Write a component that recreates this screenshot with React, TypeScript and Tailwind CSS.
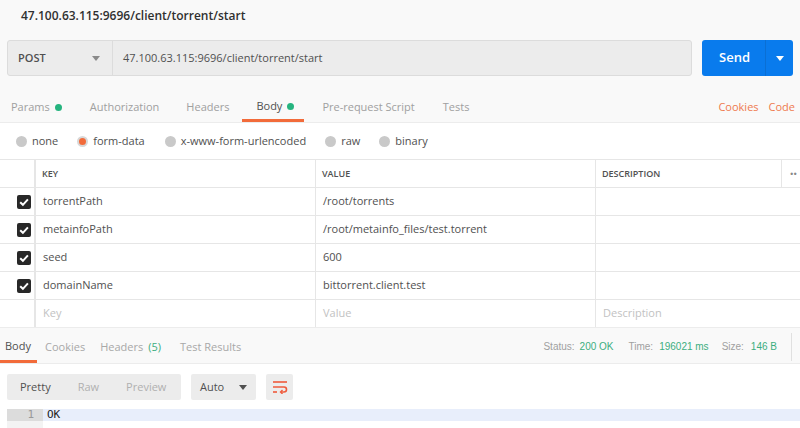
import React from "react"

const rows = [
  { key: "torrentPath", value: "/root/torrents" },
  { key: "metainfoPath", value: "/root/metainfo_files/test.torrent" },
  { key: "seed", value: "600" },
  { key: "domainName", value: "bittorrent.client.test" },
]

const Caret = ({ className }: { className: string }) => (
  <svg width="8" height="5" viewBox="0 0 8 5" className={className}>
    <path d="M0 0 L8 0 L4 5 Z" fill="currentColor" />
  </svg>
)

const Check = () => (
  <svg width="14" height="14" viewBox="0 0 14 14">
    <rect width="14" height="14" rx="2" fill="#282828" />
    <path d="M3.2 7.2 L5.9 9.8 L10.9 4.3" stroke="#fff" strokeWidth="2" fill="none" />
  </svg>
)

const Radio = ({ active }: { active?: boolean }) => (
  <span
    className={`mr-[5px] inline-block h-[11px] w-[11px] rounded-full ${
      active ? "border-2 border-[#d8d8d8] bg-[#f26b3a]" : "bg-[#c9c9c9]"
    }`}
  />
)

const WrapIcon = () => (
  <svg width="16" height="14" viewBox="0 0 16 14" className="text-[#ef5b3c]">
    <path d="M1 2 H15" stroke="currentColor" strokeWidth="1.6" />
    <path d="M1 7 H12 a2.5 2.5 0 0 1 0 5 H9" stroke="currentColor" strokeWidth="1.6" fill="none" />
    <path d="M10.5 10 L8.5 12 L10.5 14" stroke="currentColor" strokeWidth="1.4" fill="none" />
    <path d="M1 12 H5" stroke="currentColor" strokeWidth="1.6" />
  </svg>
)

export default function App() {
  return (
    <div className="h-[428px] w-[800px] overflow-hidden bg-white font-['Open_Sans',sans-serif] text-[11px] text-[#333]">
      {/* request header */}
      <div className="bg-[#f9f9f9]">
        <div className="flex h-[31px] items-center px-[21px] pt-[1px] text-[12px] font-semibold text-[#303030]">
          47.100.63.115:9696/client/torrent/start
        </div>
        <div className="flex h-[59px] pt-[9px] pr-[7px] pl-[7px]">
          <div className="flex h-[36px] flex-1 rounded-[3px] border border-[#dcdcdc] bg-[#ececec]">
            <div className="flex w-[105px] items-center justify-between border-r border-[#dcdcdc] pr-[12px] pl-[10px] font-semibold text-[#505050]">
              POST
              <Caret className="text-[#8a8a8a]" />
            </div>
            <div className="flex items-center pl-[10px] text-[#505050]">
              47.100.63.115:9696/client/torrent/start
            </div>
          </div>
          <div className="ml-[10px] flex h-[36px] w-[91px] rounded-[3px] bg-[#097bed] text-white">
            <div className="flex flex-1 items-center justify-center pl-[2px] text-[13px] font-semibold">
              Send
            </div>
            <div className="flex w-[28px] items-center justify-center border-l border-[#0a6fd4]">
              <Caret className="text-white" />
            </div>
          </div>
        </div>
        <div className="flex h-[33px] items-stretch border-b border-[#ececec] pt-[3px] text-[#a0a0a0]">
          <div className="flex items-center pl-[11px]">
            Params
            <span className="ml-[5px] h-[7px] w-[7px] rounded-full bg-[#26b47f]" />
          </div>
          <div className="flex items-center pl-[28px]">Authorization</div>
          <div className="flex items-center pl-[27px]">Headers</div>
          <div className="ml-[13px] flex items-center border-b-[3px] border-[#f26b3a] pr-[10px] pl-[14px] text-[#505050]">
            Body
            <span className="ml-[5px] h-[7px] w-[7px] rounded-full bg-[#26b47f]" />
          </div>
          <div className="flex items-center pl-[18px]">Pre-request Script</div>
          <div className="flex items-center pl-[28px]">Tests</div>
          <div className="ml-auto flex items-center gap-[10px] pr-[5px] text-[#ef7a4e]">
            <span>Cookies</span>
            <span>Code</span>
          </div>
        </div>
      </div>

      {/* body type */}
      <div className="flex h-[36px] items-center pt-[1px] pl-[16px] text-[#505050]">
        <label className="flex items-center">
          <Radio />
          none
        </label>
        <label className="ml-[19px] flex items-center">
          <Radio active />
          form-data
        </label>
        <label className="ml-[20px] flex items-center">
          <Radio />
          x-www-form-urlencoded
        </label>
        <label className="ml-[19px] flex items-center">
          <Radio />
          raw
        </label>
        <label className="ml-[19px] flex items-center">
          <Radio />
          binary
        </label>
      </div>

      {/* params table */}
      <div className="border-t border-[#e6e6e6]">
        <div className="grid h-[28px] grid-cols-[36px_280px_280px_186px_18px] border-b border-[#e6e6e6] text-[9px] font-semibold text-[#505050]">
          <div className="border-r-[2px] border-[#e6e6e6]" />
          <div className="flex items-center border-r border-[#e6e6e6] pl-[6px]">KEY</div>
          <div className="flex items-center border-r border-[#e6e6e6] pl-[6px]">VALUE</div>
          <div className="flex items-center border-r border-[#e6e6e6] pl-[6px]">DESCRIPTION</div>
          <div className="flex items-center pl-[8px] text-[#888]">••</div>
        </div>
        {rows.map((r) => (
          <div
            key={r.key}
            className="grid h-[28px] grid-cols-[36px_280px_280px_204px] border-b border-[#e6e6e6] text-[#505050]"
          >
            <div className="flex items-center justify-end border-r-[2px] border-[#e6e6e6] pr-[3px]">
              <Check />
            </div>
            <div className="flex items-center border-r border-[#e6e6e6] pl-[7px]">{r.key}</div>
            <div className="flex items-center border-r border-[#e6e6e6] pl-[7px]">{r.value}</div>
            <div />
          </div>
        ))}
        <div className="grid h-[27px] grid-cols-[36px_280px_280px_204px] text-[#c2c2c2]">
          <div className="border-r-[2px] border-[#e6e6e6]" />
          <div className="flex items-center border-r border-[#e6e6e6] pl-[7px]">Key</div>
          <div className="flex items-center border-r border-[#e6e6e6] pl-[7px]">Value</div>
          <div className="flex items-center pl-[7px]">Description</div>
        </div>
      </div>

      {/* response bar */}
      <div className="flex h-[37px] items-stretch border-y border-[#ececec] bg-[#f9f9f9] text-[#a8a8a8]">
        <div className="flex w-[37px] items-center border-b-[3px] border-[#f26b3a] pt-[4px] pl-[5px] text-[#505050]">
          Body
        </div>
        <div className="flex items-center pt-[4px] pl-[8px]">Cookies</div>
        <div className="flex items-center pt-[4px] pl-[15px]">
          Headers <span className="ml-[5px] text-[#3cae80]">(5)</span>
        </div>
        <div className="flex items-center pt-[4px] pl-[19px]">Test Results</div>
        <div className="ml-auto flex items-center pt-[2px] pr-[8px] font-['Liberation_Sans',sans-serif] text-[10px] text-[#a0a0a0]">
          <span>Status:</span>
          <span className="ml-[5px] text-[#3cae80]">200 OK</span>
          <span className="ml-[15px]">Time:</span>
          <span className="ml-[6px] text-[#3cae80]">196021 ms</span>
          <span className="ml-[13px]">Size:</span>
          <span className="ml-[7px] text-[#3cae80]">146 B</span>
          <span className="ml-[14px] h-[28px] w-px bg-[#e0e0e0]" />
        </div>
      </div>

      {/* response toolbar */}
      <div className="mt-[10px] flex h-[26px] items-stretch pl-[7px]">
        <div className="flex w-[174px] items-center rounded-[2px] bg-[#ececec] text-[#b0b0b0]">
          <span className="pl-[13px] text-[#505050]">Pretty</span>
          <span className="pl-[27px]">Raw</span>
          <span className="pl-[27px]">Preview</span>
        </div>
        <div className="ml-[10px] flex w-[65px] items-center justify-between rounded-[2px] bg-[#ececec] pr-[9px] pl-[9px] text-[#505050]">
          Auto
          <Caret className="text-[#505050]" />
        </div>
        <div className="ml-[10px] flex w-[27px] items-center justify-center rounded-[2px] bg-[#ececec]">
          <WrapIcon />
        </div>
      </div>

      {/* editor */}
      <div className="mt-[9px] flex h-[12px] pl-[7px] font-['DejaVu_Sans_Mono',monospace] text-[11px] leading-[12px]">
        <div className="w-[36px] bg-[#dcdcdc] pr-[9px] text-right text-[#999]">1</div>
        <div className="flex-1 bg-[#e8eefb] pl-[4px] text-[#222]">OK</div>
      </div>
      <div className="ml-[7px] h-[8px] w-[36px] bg-[#f3f3f3]" />
    </div>
  )
}
